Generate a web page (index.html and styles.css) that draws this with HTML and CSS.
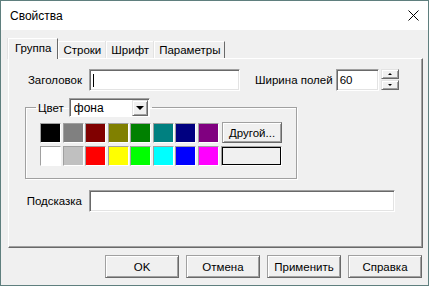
FILE: index.html
```html
<!DOCTYPE html>
<html lang="ru">
<head>
    <meta charset="UTF-8">
    <meta name="viewport" content="width=device-width, initial-scale=1.0">
    <title>Свойства</title>
    <link rel="stylesheet" href="styles.css">
</head>
<body>
    <div class="window">
        <div class="titlebar">
            <span class="title">Свойства</span>
            <svg class="close" width="11" height="11" viewBox="0 0 11 11">
                <path d="M0.5 0.5 L10.5 10.5 M10.5 0.5 L0.5 10.5" stroke="#000" stroke-width="1" fill="none"/>
            </svg>
        </div>
        <div class="content">
            <div class="tabs">
                <div class="tab active">Группа</div>
                <div class="tab">Строки</div>
                <div class="tab">Шрифт</div>
                <div class="tab">Параметры</div>
            </div>
            <div class="panel">
                <div class="row">
                    <span class="label">Заголовок</span>
                    <div class="edit caption"><span class="caret"></span></div>
                    <span class="label-width">Ширина полей</span>
                    <div class="edit num">60</div>
                    <div class="spin">
                        <div class="spin-btn"><span class="arrow-up"></span></div>
                        <div class="spin-btn"><span class="arrow-down"></span></div>
                    </div>
                </div>
                <fieldset class="group">
                    <legend class="legend">
                        <span>Цвет</span>
                        <div class="combo">
                            <span class="combo-text">фона</span>
                            <div class="combo-btn"><span class="combo-arrow"></span></div>
                        </div>
                    </legend>
                    <div class="colors">
                        <div class="swatches">
                            <div class="swatch c-black"></div>
                            <div class="swatch c-gray"></div>
                            <div class="swatch c-maroon"></div>
                            <div class="swatch c-olive"></div>
                            <div class="swatch c-green"></div>
                            <div class="swatch c-teal"></div>
                            <div class="swatch c-navy"></div>
                            <div class="swatch c-purple"></div>
                            <div class="swatch c-white"></div>
                            <div class="swatch c-silver"></div>
                            <div class="swatch c-red"></div>
                            <div class="swatch c-yellow"></div>
                            <div class="swatch c-lime"></div>
                            <div class="swatch c-aqua"></div>
                            <div class="swatch c-blue"></div>
                            <div class="swatch c-fuchsia"></div>
                        </div>
                        <div class="side">
                            <button class="btn other-btn">Другой...</button>
                            <div class="preview"></div>
                        </div>
                    </div>
                </fieldset>
                <div class="row hint-row">
                    <span class="label">Подсказка</span>
                    <div class="edit hint"></div>
                </div>
            </div>
            <div class="buttons">
                <button class="btn dlg-btn">OK</button>
                <button class="btn dlg-btn">Отмена</button>
                <button class="btn dlg-btn">Применить</button>
                <button class="btn dlg-btn">Справка</button>
            </div>
        </div>
    </div>
</body>
</html>
```

FILE: styles.css
```css
* {
    box-sizing: border-box;
}
body {
    margin: 0;
    font-family: "Liberation Sans", Arial, sans-serif;
    font-size: 11.5px;
    color: #000;
}
.window {
    width: 429px;
    height: 286px;
    border: 1px solid #5f7f7e;
    background: #f0f0f0;
    display: flex;
    flex-direction: column;
}
.titlebar {
    height: 29px;
    background: #fff;
    display: flex;
    align-items: center;
    padding-left: 9px;
}
.title {
    font-size: 12px;
}
.close {
    margin-left: auto;
    margin-right: 9px;
}
.content {
    padding: 8px 5px 0 7px;
}

/* tabs */
.tabs {
    display: flex;
    align-items: flex-end;
    height: 20px;
}
.tab {
    height: 17px;
    padding: 0 4px;
    line-height: 16px;
    border: 1px solid #fff;
    border-right-color: #696969;
    border-bottom: none;
    box-shadow: -1px 0 0 #e3e3e3;
    position: relative;
}
.tab.active {
    height: 21px;
    margin-bottom: -1px;
    padding: 0 6px;
    line-height: 19px;
    background: #f0f0f0;
    z-index: 1;
}
.panel {
    height: 190px;
    border: 1px solid;
    border-color: #fff #696969 #696969 #fff;
    box-shadow: inset -1px -1px 0 #a0a0a0;
    padding-top: 10px;
}

/* fields */
.row {
    display: flex;
    align-items: center;
    height: 22px;
    white-space: nowrap;
}
.label {
    width: 80px;
    padding-right: 7px;
    text-align: right;
    flex-shrink: 0;
}
.edit {
    height: 22px;
    background: #fff;
    border: 1px solid;
    border-color: #a0a0a0 #fff #fff #a0a0a0;
    box-shadow: inset 1px 1px 0 #696969, inset -1px -1px 0 #e3e3e3;
    padding: 4px 3px 0;
    flex-shrink: 0;
}
.caption {
    width: 151px;
}
.caret {
    display: block;
    width: 1px;
    height: 13px;
    background: #000;
}
.label-width {
    margin: 0 3px 0 15px;
    flex-shrink: 0;
}
.num {
    width: 43px;
}
.spin {
    margin-left: 2px;
    display: flex;
    flex-direction: column;
    gap: 1px;
    height: 22px;
}
.spin-btn {
    width: 18px;
    height: 10px;
    border: 1px solid;
    border-color: #e3e3e3 #696969 #696969 #e3e3e3;
    box-shadow: inset 1px 1px 0 #fff, inset -1px -1px 0 #a0a0a0;
    display: flex;
    align-items: center;
    justify-content: center;
}
.arrow-up {
    border: 2px solid transparent;
    border-top: none;
    border-bottom: 2px solid #000;
}
.arrow-down {
    border: 2px solid transparent;
    border-bottom: none;
    border-top: 2px solid #000;
}

/* colour group */
.group {
    margin: 7px 0 0 16px;
    width: 272px;
    border: 1px solid #a0a0a0;
    box-shadow: 1px 1px 0 #fff, inset 1px 1px 0 #fff;
    padding: 6px 13px 12px 14px;
    min-width: 0;
}
.legend {
    display: flex;
    align-items: center;
    padding: 0 2px;
    margin-left: -4px;
}
.combo {
    margin-left: 5px;
    width: 81px;
    height: 19px;
    background: #fff;
    border: 1px solid;
    border-color: #a0a0a0 #fff #fff #a0a0a0;
    box-shadow: inset 1px 1px 0 #696969;
    display: flex;
    align-items: center;
    padding: 1px 1px 1px 4px;
}
.combo-text {
    flex: 1;
    font-size: 12px;
}
.combo-btn {
    width: 16px;
    height: 16px;
    background: #f0f0f0;
    border: 1px solid;
    border-color: #e3e3e3 #696969 #696969 #e3e3e3;
    box-shadow: inset 1px 1px 0 #fff, inset -1px -1px 0 #a0a0a0;
    display: flex;
    align-items: center;
    justify-content: center;
}
.combo-arrow {
    border: 4px solid transparent;
    border-bottom: none;
    border-top: 4px solid #000;
}
.colors {
    display: flex;
    gap: 3.5px;
}
.swatches {
    display: grid;
    grid-template-columns: repeat(8, 21px);
    grid-auto-rows: 20px;
    column-gap: 1.5px;
    row-gap: 3px;
}
.swatch {
    border: 1px solid;
    border-color: #a0a0a0 #fff #fff #a0a0a0;
}
.c-black { background: #000; }
.c-gray { background: #808080; }
.c-maroon { background: #800000; }
.c-olive { background: #808000; }
.c-green { background: #008000; }
.c-teal { background: #008080; }
.c-navy { background: #000080; }
.c-purple { background: #800080; }
.c-white { background: #fff; }
.c-silver { background: #c0c0c0; }
.c-red { background: #f00; }
.c-yellow { background: #ff0; }
.c-lime { background: #0f0; }
.c-aqua { background: #0ff; }
.c-blue { background: #00f; }
.c-fuchsia { background: #f0f; }
.side {
    display: flex;
    flex-direction: column;
    gap: 3px;
    margin-top: -1px;
}
.btn {
    font-family: inherit;
    font-size: 11.5px;
    font-weight: normal;
    color: #000;
    background: #f0f0f0;
    border: 1px solid;
    border-color: #a0a0a0 #696969 #696969 #a0a0a0;
    box-shadow: inset 1px 1px 0 #fff, inset -1px -1px 0 #a0a0a0;
    padding: 0;
}
.other-btn {
    width: 60px;
    height: 21px;
}
.preview {
    width: 61px;
    height: 20px;
    margin-left: -1px;
    border: 1px solid;
    border-color: #a0a0a0 #fff #fff #a0a0a0;
    box-shadow: inset 0 0 0 1px #000;
}

.hint-row {
    margin-top: 11px;
}
.hint {
    width: 306px;
}

/* dialog buttons */
.buttons {
    display: flex;
    justify-content: flex-end;
    gap: 7px;
    margin-top: 7px;
    padding-right: 1px;
}
.dlg-btn {
    width: 74px;
    height: 23px;
}
```
